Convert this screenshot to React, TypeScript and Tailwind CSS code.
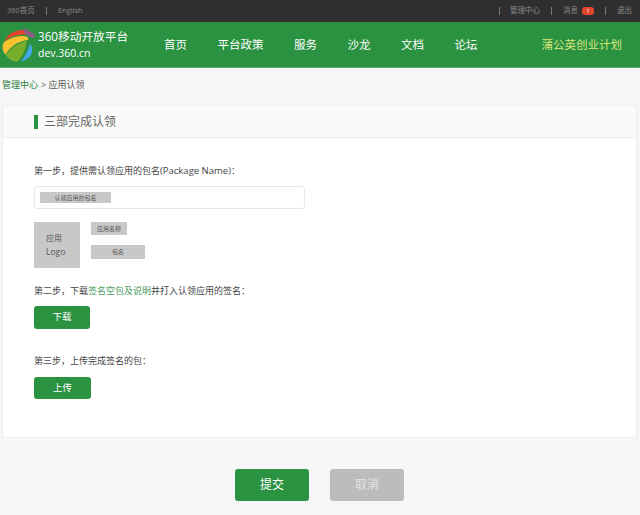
import React from 'react';

const navItems = ['首页', '平台政策', '服务', '沙龙', '文档', '论坛'];

const Logo: React.FC = () => (
  <svg width="37" height="40" viewBox="0 15 110 120" className="shrink-0">
    <path d="M62 30 L78 26 L105 45 L100 55 L88 50 Z" fill="#8e5a86" />
    <path d="M12 65 C22 42 42 30 68 30 L78 45 C55 42 30 50 12 65 Z" fill="#e5452f" />
    <path d="M8 88 C6 78 8 72 12 66 C35 50 60 44 82 50 L85 60 C55 62 30 80 16 104 C11 98 9 94 8 88 Z" fill="#f9c22e" />
    <path d="M17 106 C32 82 55 68 80 62 C78 85 68 108 52 125 C38 125 25 118 17 106 Z" fill="#79ae2c" />
    <path d="M62 124 C75 110 85 90 90 70 C96 80 97 90 95 100 C90 112 78 122 62 124 Z" fill="#45a5e4" />
  </svg>
);

const Chip: React.FC<{ className: string; children: React.ReactNode }> = ({ className, children }) => (
  <div className={`flex items-center justify-center bg-[#c8c8c8] text-[6px] leading-none text-[#555] ${className}`}>
    {children}
  </div>
);

const App: React.FC = () => {
  return (
    <div className="flex h-[515px] w-[640px] flex-col overflow-hidden bg-[#f6f6f6] font-['Open_Sans','Noto_Sans_CJK_SC',sans-serif] text-[#444]">
      <header>
        <div className="flex h-[22px] items-center justify-between bg-[#2f2f2f] pl-[7px] pr-[8px] text-[7.5px] text-[#8a8a8a]">
          <div className="flex items-center">
            <span>360首页</span>
            <span className="ml-[11px] h-[8px] w-px bg-[#777]" />
            <span className="ml-[11px]">English</span>
          </div>
          <div className="flex items-center">
            <span className="h-[8px] w-px bg-[#777]" />
            <span className="ml-[10px]">管理中心</span>
            <span className="ml-[11px] h-[8px] w-px bg-[#777]" />
            <span className="ml-[11px]">消息</span>
            <span className="ml-[4px] flex h-[8px] w-[12px] items-center justify-center rounded-[3px] bg-[#e2452b] text-[6px] leading-none text-white">1</span>
            <span className="ml-[11px] h-[8px] w-px bg-[#777]" />
            <span className="ml-[11px]">退出</span>
          </div>
        </div>
        <div className="flex h-[46px] items-center border-b border-[#5fae6d] bg-[#2a9241] pr-[18px] text-white">
          <Logo />
          <div className="ml-[1px] flex w-[126px] flex-col justify-center">
            <span className="text-[11.7px] leading-[17px] whitespace-nowrap">360移动开放平台</span>
            <span className="text-[10.5px] leading-[16px]">dev.360.cn</span>
          </div>
          <nav className="flex gap-[30.5px] text-[11.5px]">
            {navItems.map((item) => (
              <a key={item} className="whitespace-nowrap">{item}</a>
            ))}
          </nav>
          <a className="ml-auto text-[11.5px] whitespace-nowrap text-[#d6e77a]">蒲公英创业计划</a>
        </div>
      </header>

      <div className="flex h-[37px] items-center pb-[4px] pl-[2px] text-[9px]">
        <span className="text-[#2a7d3e]">管理中心</span>
        <span className="ml-[3px] text-[#555]">&gt; 应用认领</span>
      </div>

      <main className="mx-[2px] mr-[3px] h-[333px] rounded-[2px] border border-[#eeeeee] bg-white">
        <div className="flex h-[32px] items-center border-b border-[#eeeeee] bg-[#fafafa] pl-[31px]">
          <span className="h-[14px] w-[4px] bg-[#2a9241]" />
          <h2 className="ml-[6px] text-[12px] font-normal text-[#666]">三部完成认领</h2>
        </div>

        <div className="flex flex-col pl-[31px]">
          <p className="mt-[26px] text-[9px] leading-[13px]">
            第一步，提供需认领应用的包名<span className="text-[9.5px]">(Package Name)</span>：
          </p>
          <div className="mt-[9px] flex h-[23px] w-[271px] items-center rounded-[3px] border border-[#e8e8e8] pl-[5px]">
            <Chip className="h-[11px] w-[71px]">认领应用的包名</Chip>
          </div>
          <div className="mt-[13px] flex">
            <div className="flex h-[46px] w-[46px] flex-col items-start justify-center gap-[3px] bg-[#c8c8c8] pb-[2px] pl-[12px] text-[8px] leading-[11px] text-[#555]">
              <span>应用</span>
              <span className="text-[8.5px]">Logo</span>
            </div>
            <div className="ml-[11px] flex flex-col items-start gap-[10px]">
              <Chip className="h-[13px] w-[36px]">应用名称</Chip>
              <Chip className="h-[14px] w-[54px]">包名</Chip>
            </div>
          </div>
          <p className="mt-[16px] text-[9px] leading-[13px]">
            第二步，下载<span className="text-[#4d9d5f]">签名空包及说明</span>并打入认领应用的签名：
          </p>
          <button className="mt-[9px] h-[23px] w-[56px] rounded-[3px] bg-[#2a9241] text-[9.5px] text-white">下载</button>
          <p className="mt-[25px] text-[9px] leading-[13px]">第三步，上传完成签名的包：</p>
          <button className="mt-[10px] h-[22px] w-[57px] rounded-[3px] bg-[#2a9241] text-[9.5px] text-white">上传</button>
        </div>
      </main>

      <div className="mt-[31px] flex justify-center gap-[21px] pr-[1px]">
        <button className="h-[32px] w-[74px] rounded-[3px] bg-[#2a9241] text-[12px] text-white">提交</button>
        <button className="h-[32px] w-[74px] rounded-[3px] bg-[#bcbcbc] text-[12px] text-[#e4e4e4]">取消</button>
      </div>
    </div>
  );
};

export default App;
